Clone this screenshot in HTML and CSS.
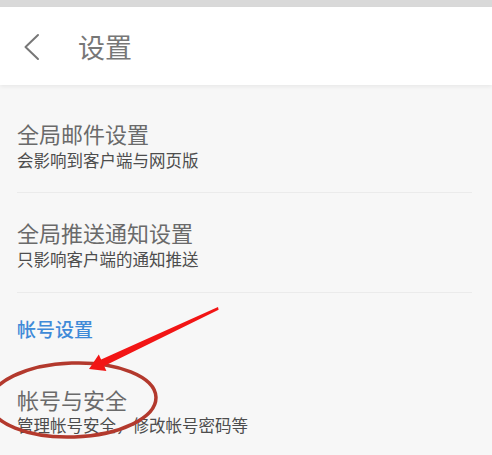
FILE: index.html
```html
<!DOCTYPE html>
<html lang="zh-CN">
<head>
<meta charset="utf-8">
<title>设置</title>
<link rel="stylesheet" href="styles.css">
</head>
<body>
<div class="page">
  <div class="statusbar"></div>
  <header class="header">
    <svg class="back" width="16" height="28" viewBox="0 0 16 28">
      <polyline points="14,2 1.5,14 14,26" fill="none" stroke="#777" stroke-width="2" stroke-linecap="round" stroke-linejoin="round"/>
    </svg>
    <h1 class="title">设置</h1>
  </header>
  <main class="list">
    <div class="item item-first">
      <div class="item-title">全局邮件设置</div>
      <div class="item-sub">会影响到客户端与网页版</div>
    </div>
    <div class="divider"></div>
    <div class="item item-second">
      <div class="item-title">全局推送通知设置</div>
      <div class="item-sub">只影响客户端的通知推送</div>
    </div>
    <div class="divider"></div>
    <div class="section">帐号设置</div>
    <div class="item item-third">
      <div class="item-title">帐号与安全</div>
      <div class="item-sub">管理帐号安全，修改帐号密码等</div>
    </div>
  </main>
  <svg class="annot" width="492" height="455" viewBox="0 0 492 455">
    <ellipse cx="73" cy="400" rx="83" ry="37" fill="none" stroke="#b3392d" stroke-width="3.5" transform="rotate(-2 73 400)"/>
    <polygon points="218,307 218.6,309.8 104.2,366 106.4,371 89,369 98.8,354.5 101.1,359.6" fill="#f21515"/>
  </svg>
</div>
</body>
</html>
```
FILE: styles.css
```css
* { box-sizing: border-box; }
html, body {
  margin: 0;
  padding: 0;
}
body {
  background: #f7f7f7;
  font-family: "Noto Sans CJK SC", "Noto Sans", sans-serif;
  width: 492px;
  height: 455px;
  overflow: hidden;
}
.page {
  position: relative;
  width: 492px;
  height: 455px;
}
.statusbar {
  height: 7px;
  background: #d9d9d9;
}
.header {
  height: 78px;
  background: #ffffff;
  display: flex;
  align-items: center;
  padding-left: 24px;
  box-shadow: 0 2px 4px rgba(0, 0, 0, 0.06);
  position: relative;
  z-index: 1;
}
.back {
  display: block;
  margin-top: 2px;
}
.title {
  margin: 2px 0 0 38px;
  font-size: 27px;
  font-weight: 400;
  line-height: 32px;
  color: #777777;
}
.list {
  display: flex;
  flex-direction: column;
}
.item {
  padding-left: 17px;
  display: flex;
  flex-direction: column;
  gap: 4px;
}
.item-first { padding-top: 35px; padding-bottom: 22px; }
.item-second { padding-top: 26px; padding-bottom: 23px; }
.item-third { padding-top: 46px; gap: 3px; }
.item-title {
  font-size: 22px;
  line-height: 26px;
  color: #6a6a6a;
}
.item-sub {
  font-size: 16.5px;
  line-height: 20px;
  color: #4d4d4d;
}
.divider {
  height: 1px;
  background: #ebebeb;
  margin: 0 20px 0 17px;
}
.section {
  padding: 24px 0 0 17px;
  font-size: 19px;
  line-height: 23px;
  color: #3f8ad8;
  font-weight: 500;
}
.annot {
  position: absolute;
  left: 0;
  top: 0;
  pointer-events: none;
}
```
